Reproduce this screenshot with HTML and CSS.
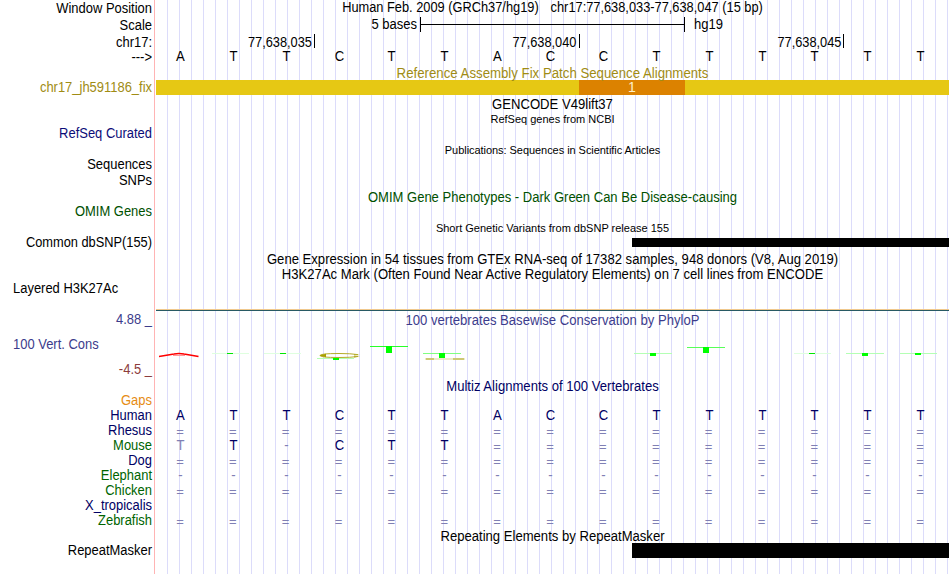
FILE: index.html
```html
<!DOCTYPE html>
<html lang="en">
<head>
  <meta charset="UTF-8">
  <title>Human hg19 chr17:77,638,033-77,638,047</title>
  <link rel="stylesheet" href="styles.css">
</head>
<body>
  <div class="browser">
    <div class="labels">
      <div class="label">Window Position</div>
      <div class="label ruler">Scale</div>
      <div class="label ruler">chr17:</div>
      <div class="label strand">---&gt;</div>
      <div class="label patch">chr17_jh591186_fix</div>
      <div class="label refseq">RefSeq Curated</div>
      <div class="label pubs">Sequences</div>
      <div class="label snps">SNPs</div>
      <div class="label omim">OMIM Genes</div>
      <div class="label dbsnp">Common dbSNP(155)</div>
      <div class="label left layered">Layered H3K27Ac</div>
      <div class="label cons-max">4.88 _</div>
      <div class="label left cons">100 Vert. Cons</div>
      <div class="label cons-min">-4.5 _</div>
      <div class="label gaps">Gaps</div>
      <div class="label blue">Human</div>
      <div class="label blue">Rhesus</div>
      <div class="label green">Mouse</div>
      <div class="label blue">Dog</div>
      <div class="label green">Elephant</div>
      <div class="label green">Chicken</div>
      <div class="label blue">X_tropicalis</div>
      <div class="label green">Zebrafish</div>
      <div class="label repeat">RepeatMasker</div>
    </div>

    <div class="tracks">
      <div class="title position"><span>Human Feb. 2009 (GRCh37/hg19)</span><span>chr17:77,638,033-77,638,047 (15 bp)</span></div>
      <div class="scale">
        <span class="scale-size">5 bases</span>
        <span class="scale-bar"><i></i></span>
        <span class="scale-db">hg19</span>
      </div>
      <div class="ticks">
        <div class="tick first"><span>77,638,035</span></div>
        <div class="tick"><span>77,638,040</span></div>
        <div class="tick"><span>77,638,045</span></div>
      </div>
      <div class="bases sequence" data-bases="ATTCTTACCTTTTTT"></div>

      <div class="title patch-title">Reference Assembly Fix Patch Sequence Alignments</div>
      <div class="patch-bar"><span>1</span></div>

      <div class="title gencode">GENCODE V49lift37</div>
      <div class="title small ncbi">RefSeq genes from NCBI</div>
      <div class="title small publications">Publications: Sequences in Scientific Articles</div>
      <div class="title omim-title">OMIM Gene Phenotypes - Dark Green Can Be Disease-causing</div>
      <div class="title small variants">Short Genetic Variants from dbSNP release 155</div>
      <div class="block snp-block"></div>
      <div class="title gtex">Gene Expression in 54 tissues from GTEx RNA-seq of 17382 samples, 948 donors (V8, Aug 2019)</div>
      <div class="title h3k27">H3K27Ac Mark (Often Found Near Active Regulatory Elements) on 7 cell lines from ENCODE</div>
      <div class="signal"></div>

      <div class="title phylop-title">100 vertebrates Basewise Conservation by PhyloP</div>
      <svg class="phylop" width="793" height="20" viewBox="156 343 793 20">
        <!-- negative scores -->
        <path d="M159 356.500L174 354Q179 353 184 354L198.500 356.500" fill="none" stroke="#f00" stroke-width="1.600"/>
        <path d="M173 355.500H185" stroke="#f99"/>
        <path d="M358 354.600Q351 353.500 339 353.500Q320 353.500 320 355.500Q320 357.500 339 357.500Q351 357.500 358 356.500" fill="none" stroke="#b4ac28"/>
        <path d="M319 355.500L326 353.800V357.200Z" fill="#a8a000"/>
        <path d="M354 354L360 355L354 355.500ZM354 357.500L360 356.500L354 356Z" fill="#b4ac28"/>
        <path d="M425 359H465" stroke="#e8e4b8" stroke-width="1.500"/>
        <path d="M426 359H434M453 359H464" stroke="#c4bd58" stroke-width="1.300"/>
        <!-- thin crossbars of the T letters -->
        <g shape-rendering="crispEdges">
          <path d="M212 353.500H249M264 353.500H301M794 353.500H831" stroke="#dfffdf"/>
          <path d="M317 358.500H354M634 353.500H672M846 353.500H884M900 353.500H937" stroke="#b4ffb4"/>
          <path d="M423 353.500H461" stroke="#80ff80"/>
          <path d="M370 346.500H408" stroke="#28ff28"/>
          <path d="M687 347.500H725" stroke="#58ff58"/>
          <path d="M227 353h6v1h-6zM280 353h6v1h-6zM809 353h6v1h-6z" fill="#00e800"/>
          <path d="M333 358h6v2h-6zM386 346h6v7h-6zM439 353h6v5h-6zM650 353h6v3h-6zM703 347h6v6h-6zM862 353h6v3h-6zM915 353h6v2h-6z" fill="#0f0"/>
        </g>
      </svg>

      <div class="title multiz-title">Multiz Alignments of 100 Vertebrates</div>
      <div class="multiz">
        <div class="bases" data-bases="ATTCTTACCTTTTTT"></div>
        <div class="bases" data-bases="==============="></div>
        <div class="bases" data-bases="tT-CTT========="></div>
        <div class="bases" data-bases="==============="></div>
        <div class="bases" data-bases="---------------"></div>
        <div class="bases" data-bases="==============="></div>
        <div class="bases" data-bases=""></div>
        <div class="bases" data-bases="==============="></div>
      </div>
      <div class="title repeat-title">Repeating Elements by RepeatMasker</div>
      <div class="block repeat-block"></div>
    </div>
  </div>

  <script>
    // lower case marks a base that differs from human
    document.querySelectorAll('.bases').forEach(row => {
      for (const base of row.dataset.bases) {
        const cell = document.createElement('span');
        cell.textContent = base.toUpperCase();
        if (!/[A-Z]/.test(base)) cell.className = 'faded';
        if (base === '=') cell.className = 'faded equal';
        row.appendChild(cell);
      }
    });
  </script>
</body>
</html>
```

FILE: styles.css
```css
body {
  margin: 0;
  background: #fff;
  color: #000;
  font: 14px/14px "Liberation Sans", Arial, Helvetica, sans-serif;
}
.browser {
  display: flex;
  width: 949px;
  height: 574px;
  overflow: hidden;
}
.labels {
  box-sizing: border-box;
  width: 155px;
  padding: 1px 2px 0 13px;
  border-right: 1px solid #ffb4b4;
}
/* condensed to the width of 13px text */
.label {
  height: 15px;
  text-align: right;
  white-space: nowrap;
  transform: scaleX(0.925);
  transform-origin: right;
}
.label.left {
  text-align: left;
  transform-origin: left;
}
.ruler { margin-top: 2px; }
.patch { margin-top: 15px; color: #a08c14; }
.refseq { margin-top: 31px; color: #0c0c78; }
.pubs { margin-top: 16px; }
.snps { margin-top: 1px; }
.omim { margin-top: 16px; color: #005000; }
.dbsnp { margin-top: 16px; transform: scaleX(0.915); }
.layered { margin-top: 31px; }
.cons-max { margin-top: 16px; color: #3c3c8c; }
.cons { margin-top: 10px; color: #3c3c8c; }
.cons-min { margin-top: 10px; color: #8c3c3c; }
.gaps { margin-top: 16px; color: #e68c14; }
.blue { color: #000064; }
.green { color: #006400; }
.repeat { margin-top: 15px; }

.tracks {
  width: 793px;
  margin-left: 1px;
  background: repeating-linear-gradient(to right, transparent 0 11px, #dcdcfa 11px 12px);
}
.title {
  height: 15px;
  text-align: center;
  white-space: nowrap;
  transform: scaleX(0.935);
}
.small {
  height: 12px;
  font-size: 11px;
  line-height: 12px;
  transform: none;
}
.position {
  display: flex;
  justify-content: center;
  gap: 13px;
  transform: scaleX(0.915);
}

.scale {
  display: flex;
  height: 15px;
  margin-top: 2px;
}
.scale-size {
  width: 261px;
  margin-right: 3px;
  text-align: right;
  transform: scaleX(0.93);
  transform-origin: right;
}
.scale-db {
  transform: scaleX(0.93);
  transform-origin: left;
}
.scale-bar {
  box-sizing: border-box;
  width: 265px;
  margin-right: 9px;
  padding-top: 7px;
  border: solid #000;
  border-width: 0 1px;
}
.scale-bar i {
  display: block;
  height: 1px;
  background: #000;
}
.ticks {
  display: flex;
  height: 14px;
  margin-top: 2px;
}
.tick {
  box-sizing: border-box;
  width: 264.5px;
  padding: 1px 2px 0 0;
  border-right: 1px solid #000;
  text-align: right;
}
.tick span {
  display: block;
  transform: scaleX(0.915);
  transform-origin: right;
}
.tick.first { width: 159px; }

.bases {
  display: grid;
  grid-template-columns: repeat(15, 1fr);
  height: 15px;
  margin-left: -2px;
  width: 793px;
  text-align: center;
}
.bases span { transform: scaleX(0.935); }
.sequence { margin-top: 1px; }
.faded { color: #8080b4; }
.bases .equal {
  padding: 1px 1px 0 0;
  font-size: 13px;
  line-height: 15px;
  transform: none;
}

.patch-title {
  height: 14px;
  margin-top: 2px;
  color: #a08c14;
  transform: scaleX(0.945);
}
.patch-bar {
  height: 15px;
  background: #e6c814;
}
.patch-bar span {
  display: block;
  width: 106px;
  height: 15px;
  margin-left: 423px;
  background: #dc8200;
  color: #fff0c8;
  text-align: center;
}
.gencode { margin-top: 2px; }
.ncbi { margin-top: 1px; }
.publications { margin-top: 19px; letter-spacing: -0.05px; }
.omim-title { margin-top: 34px; color: #005000; transform: scaleX(0.93); }
.variants { margin-top: 17px; }
.block {
  margin-left: 476px;
  background: #000;
}
.snp-block {
  height: 9px;
  margin-top: 4px;
}
.gtex { margin-top: 5px; }
.signal {
  height: 1px;
  margin-top: 27px;
  border-top: 1px solid #f0c88c;
  background: #285a64;
}
.phylop-title { margin-top: 2px; color: #3c3c8c; }
.phylop {
  display: block;
  margin-top: 15px;
}
.multiz-title { margin-top: 16px; color: #000064; }
.multiz { margin-top: 14px; color: #000064; }
.repeat-title {
  height: 14px;
  margin-top: 1px;
}
.repeat-block { height: 15px; }
```
